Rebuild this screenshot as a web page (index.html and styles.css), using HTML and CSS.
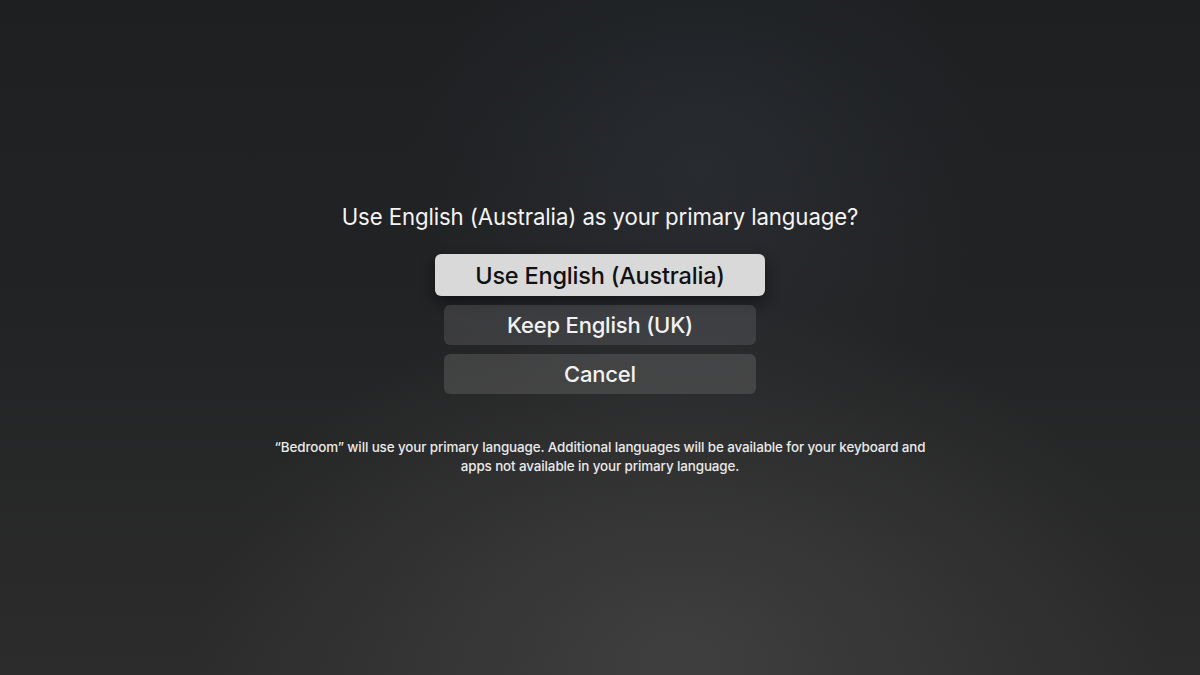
FILE: index.html
```html
<!DOCTYPE html>
<html>
<head>
<meta charset="utf-8">
<link rel="stylesheet" href="styles.css">
</head>
<body>
<main class="screen">
  <h1 class="title">Use English (Australia) as your primary language?</h1>
  <div class="buttons">
    <div class="btn btn-focused">Use English (Australia)</div>
    <div class="btn">Keep English (UK)</div>
    <div class="btn btn-cancel">Cancel</div>
  </div>
  <p class="note">“Bedroom” will use your primary language. Additional languages will be available for your keyboard and<br>apps not available in your primary language.</p>
</main>
</body>
</html>
```
FILE: styles.css
```css
html, body {
  margin: 0;
  padding: 0;
  width: 1200px;
  height: 675px;
  overflow: hidden;
}
body {
  font-family: Inter, "Liberation Sans", sans-serif;
  color: #f2f2f2;
  background:
    radial-gradient(ellipse 420px 380px at 700px 170px, rgba(60,66,80,0.3), rgba(60,66,80,0) 70%),
    radial-gradient(ellipse 650px 480px at 680px 660px, rgba(66,66,66,0.85), rgba(50,50,50,0) 75%),
    linear-gradient(180deg, #1d1f21 0%, #222324 45%, #2c2c2c 100%);
}
.screen {
  display: flex;
  flex-direction: column;
  align-items: center;
  padding-top: 202px;
}
.title {
  margin: 0;
  font-size: 22.2px;
  font-weight: 400;
  line-height: 30px;
  letter-spacing: -0.1px;
  color: #f4f4f4;
}
.buttons {
  margin-top: 22px;
  display: flex;
  flex-direction: column;
  align-items: center;
  gap: 9px;
}
.btn {
  width: 312px;
  height: 40px;
  border-radius: 6px;
  background: rgba(90, 92, 96, 0.45);
  display: flex;
  align-items: center;
  justify-content: center;
  font-size: 22px;
  font-weight: 500;
  letter-spacing: -0.2px;
  color: #f2f2f2;
}
.btn-cancel {
  background: rgba(100, 100, 100, 0.45);
}
.btn-focused {
  width: 330px;
  height: 42px;
  background: #d9d9da;
  color: #111;
  font-size: 23.5px;
  box-shadow: 0 6px 14px rgba(0,0,0,0.45);
}
.note {
  margin: 44px 0 0;
  font-size: 13.4px;
  font-weight: 500;
  line-height: 19px;
  text-align: center;
  color: #eaeaea;
  letter-spacing: -0.1px;
}
```
